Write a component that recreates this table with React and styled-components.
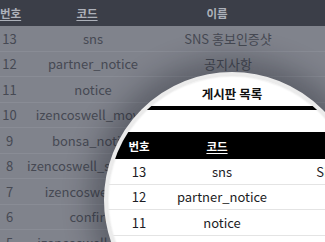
import React from "react";
import styled, { createGlobalStyle } from "styled-components";

const GlobalStyle = createGlobalStyle`
  html, body { margin: 0; padding: 0; background: #80838c; }
  body { font-family: "Noto Sans CJK KR", "Noto Sans", sans-serif; }
`;

const Stage = styled.div`
  position: relative;
  width: 325px;
  height: 242px;
  overflow: hidden;
  background: #80838c;
`;

const BG_COLS = "19px 148px 122px 1fr";

const BgHead = styled.div`
  display: grid;
  grid-template-columns: ${BG_COLS};
  height: 26px;
  align-items: center;
  background: #3b3e48;
`;

const BgHeadCell = styled.div`
  text-align: center;
  font-size: 11.5px;
  font-weight: 700;
  color: #adb1ba;
  padding-right: ${(p) => p.$shift || 0}px;
  text-decoration: ${(p) => (p.$link ? "underline" : "none")};
  text-underline-offset: 2px;
  white-space: nowrap;
`;

const BgRow = styled.div`
  display: grid;
  grid-template-columns: ${BG_COLS};
  height: 25.5px;
  box-sizing: border-box;
  align-items: center;
  border-bottom: 1px solid #898c95;
`;

const BgCell = styled.div`
  text-align: center;
  font-size: 13px;
  color: #464953;
  white-space: nowrap;
`;

const Lens = styled.div`
  position: absolute;
  left: 104px;
  top: 72px;
  width: 256px;
  height: 256px;
  box-sizing: border-box;
  border-radius: 50%;
  border: 4px solid #ebebeb;
  background: #fff;
  overflow: hidden;
  box-shadow: 0 0 28px 14px rgba(20, 22, 30, 0.32), inset 0 0 2px rgba(0, 0, 0, 0.15);
`;

const LensPage = styled.div`
  width: 248px;
  padding-top: 10px;
  display: flex;
  flex-direction: column;
`;

const LensTitle = styled.div`
  height: 16px;
  line-height: 16px;
  text-align: center;
  font-size: 12.5px;
  font-weight: 700;
  color: #111;
`;

const LensBar = styled.div`
  height: 4px;
  margin-top: 4px;
  background: #000;
`;

const LENS_COLS = "62px 104px 172px";

const LensHead = styled.div`
  margin-top: 22px;
  width: 338px;
  display: grid;
  grid-template-columns: ${LENS_COLS};
  height: 27px;
  align-items: center;
  background: #000;
`;

const LensHeadCell = styled.div`
  text-align: center;
  font-size: 11.5px;
  font-weight: 700;
  color: #fff;
  padding-right: ${(p) => p.$shift || 0}px;
  text-decoration: ${(p) => (p.$link ? "underline" : "none")};
  text-underline-offset: 2px;
`;

const LensRow = styled.div`
  width: 338px;
  display: grid;
  grid-template-columns: ${LENS_COLS};
  height: 25.5px;
  box-sizing: border-box;
  align-items: center;
  border-bottom: 1px solid #e4e4e4;
`;

const LensCell = styled.div`
  text-align: center;
  font-size: 13px;
  color: #1c1c24;
  white-space: nowrap;
`;

const rows = [
  ["13", "sns", "SNS 홍보인증샷"],
  ["12", "partner_notice", "공지사항"],
  ["11", "notice", "공지"],
  ["10", "izencoswell_movie", "동영상"],
  ["9", "bonsa_notice", "본사 공지"],
  ["8", "izencoswell_schedule", "일정"],
  ["7", "izencoswell_faq", "자주묻는질문"],
  ["6", "confirm", "확인"],
  ["5", "izencoswell_event", "이벤트"],
];

export default function App() {
  return (
    <>
      <GlobalStyle />
      <Stage>
        <BgHead>
          <BgHeadCell $link>번호</BgHeadCell>
          <BgHeadCell $link $shift={12}>코드</BgHeadCell>
          <BgHeadCell $shift={22}>이름</BgHeadCell>
          <BgHeadCell />
        </BgHead>
        {rows.map(([n, code, name]) => (
          <BgRow key={n}>
            <BgCell>{n}</BgCell>
            <BgCell>{code}</BgCell>
            <BgCell>{name}</BgCell>
            <BgCell />
          </BgRow>
        ))}
        <Lens>
          <LensPage>
            <LensTitle>게시판 목록</LensTitle>
            <LensBar />
            <LensHead>
              <LensHeadCell>번호</LensHeadCell>
              <LensHeadCell $link $shift={10}>코드</LensHeadCell>
              <LensHeadCell $shift={10}>이름</LensHeadCell>
            </LensHead>
            {rows.slice(0, 4).map(([n, code, name]) => (
              <LensRow key={n}>
                <LensCell>{n}</LensCell>
                <LensCell>{code}</LensCell>
                <LensCell>{name}</LensCell>
              </LensRow>
            ))}
          </LensPage>
        </Lens>
      </Stage>
    </>
  );
}
